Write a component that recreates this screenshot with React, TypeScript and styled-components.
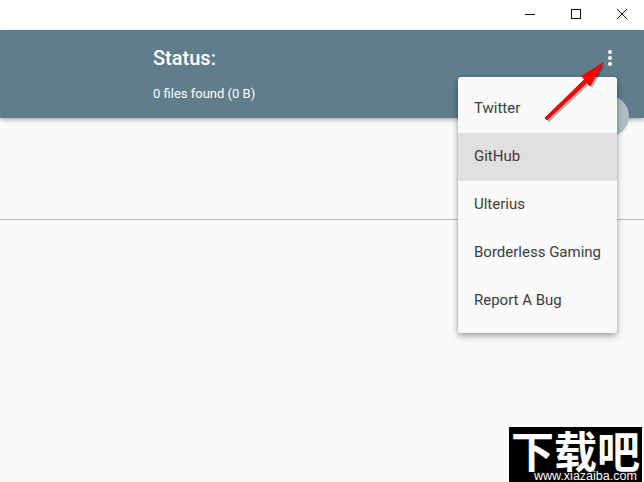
import React from "react";
import styled, { createGlobalStyle } from "styled-components";

const GlobalStyle = createGlobalStyle`
  html, body {
    margin: 0;
    padding: 0;
    background: #fafafa;
  }
  body {
    font-family: Roboto, "Liberation Sans", sans-serif;
  }
`;

const Page = styled.div`
  position: relative;
  width: 644px;
  height: 482px;
  overflow: hidden;
  background: #fafafa;
`;

const TitleBar = styled.div`
  height: 30px;
  display: flex;
  justify-content: flex-end;
  background: #fff;
`;

const WinButton = styled.div`
  width: 46px;
  height: 30px;
  display: flex;
  align-items: center;
  justify-content: center;
  padding: 0 0 2px 2px;
  box-sizing: border-box;
`;

const Header = styled.header`
  height: 88px;
  box-sizing: border-box;
  padding: 17px 0 0 153px;
  background: #607d8b;
  color: #fff;
  box-shadow: 0 2px 4px rgba(0, 0, 0, 0.3);
`;

const Title = styled.div`
  font-size: 20px;
  font-weight: 500;
  line-height: 22px;
`;

const Subtitle = styled.div`
  margin-top: 16px;
  font-size: 13px;
  line-height: 18px;
`;

const Panel = styled.section`
  height: 102px;
  box-sizing: border-box;
  border-bottom: 1px solid #bdbdbd;
`;

const Fab = styled.div`
  position: absolute;
  left: 589px;
  top: 96px;
  width: 40px;
  height: 40px;
  border-radius: 50%;
  background: #b0bec5;
  box-shadow: 0 1px 3px rgba(0, 0, 0, 0.12);
`;

const MoreButton = styled.div`
  position: absolute;
  left: 608px;
  top: 50px;
  display: flex;
  flex-direction: column;
  gap: 2px;
`;

const Dot = styled.span`
  width: 4px;
  height: 4px;
  border-radius: 50%;
  background: #fff;
`;

const Menu = styled.nav`
  position: absolute;
  left: 458px;
  top: 77px;
  width: 159px;
  padding: 8px 0;
  border-radius: 3px;
  background: #fafafa;
  box-shadow: 0 3px 7px rgba(0, 0, 0, 0.35), 0 0 3px rgba(0, 0, 0, 0.12);
`;

const MenuItem = styled.div<{ $active?: boolean }>`
  height: 48px;
  box-sizing: border-box;
  display: flex;
  align-items: center;
  padding: 0 0 2px 16px;
  font-size: 15px;
  color: #3c3c3c;
  white-space: nowrap;
  background: ${(p) => (p.$active ? "#e0e0e0" : "transparent")};
`;

const Arrow = styled.svg`
  position: absolute;
  left: 540px;
  top: 58px;
`;

const Watermark = styled.div`
  position: absolute;
  left: 509px;
  top: 427px;
  width: 133px;
  height: 55px;
  display: flex;
  flex-direction: column;
  align-items: center;
  background: #000;
  color: #fff;
`;

const WatermarkName = styled.div`
  height: 44px;
  font-family: "Noto Sans CJK SC", sans-serif;
  font-size: 43px;
  font-weight: 700;
  line-height: 44px;
`;

const WatermarkUrl = styled.div`
  width: 100%;
  box-sizing: border-box;
  padding-left: 25px;
  font-family: "Liberation Sans", sans-serif;
  font-size: 12.5px;
  line-height: 11px;
  white-space: nowrap;
`;

const menuItems = ["Twitter", "GitHub", "Ulterius", "Borderless Gaming", "Report A Bug"];

export default function App() {
  return (
    <Page>
      <GlobalStyle />
      <TitleBar>
        <WinButton>
          <svg width="10" height="10" viewBox="0 0 10 10">
            <path d="M0 5.5h10" stroke="#111" strokeWidth="1" />
          </svg>
        </WinButton>
        <WinButton>
          <svg width="10" height="10" viewBox="0 0 10 10">
            <rect x="0.5" y="0.5" width="9" height="9" fill="none" stroke="#111" />
          </svg>
        </WinButton>
        <WinButton>
          <svg width="10" height="10" viewBox="0 0 10 10">
            <path d="M0 0l10 10M10 0L0 10" stroke="#111" strokeWidth="1" />
          </svg>
        </WinButton>
      </TitleBar>
      <Header>
        <Title>Status:</Title>
        <Subtitle>0 files found (0 B)</Subtitle>
      </Header>
      <Panel />
      <Fab />
      <MoreButton>
        <Dot />
        <Dot />
        <Dot />
      </MoreButton>
      <Menu>
        {menuItems.map((item) => (
          <MenuItem key={item} $active={item === "GitHub"}>
            {item}
          </MenuItem>
        ))}
      </Menu>
      <Arrow width="70" height="70" viewBox="0 0 70 70">
        <path d="M5 60L44.500 21.500 42 18 63 5 50 28 47 24.500 7 62z" fill="#000" opacity="0.3" transform="translate(2 2)" />
        <path d="M5 60L44.500 21.500 42 18 63 5 50 28 47 24.500 7 62z" fill="#f00" stroke="#e00000" strokeWidth="1" strokeLinejoin="round" />
      </Arrow>
      <Watermark>
        <WatermarkName>下载吧</WatermarkName>
        <WatermarkUrl>www.xiazaiba.com</WatermarkUrl>
      </Watermark>
    </Page>
  );
}
